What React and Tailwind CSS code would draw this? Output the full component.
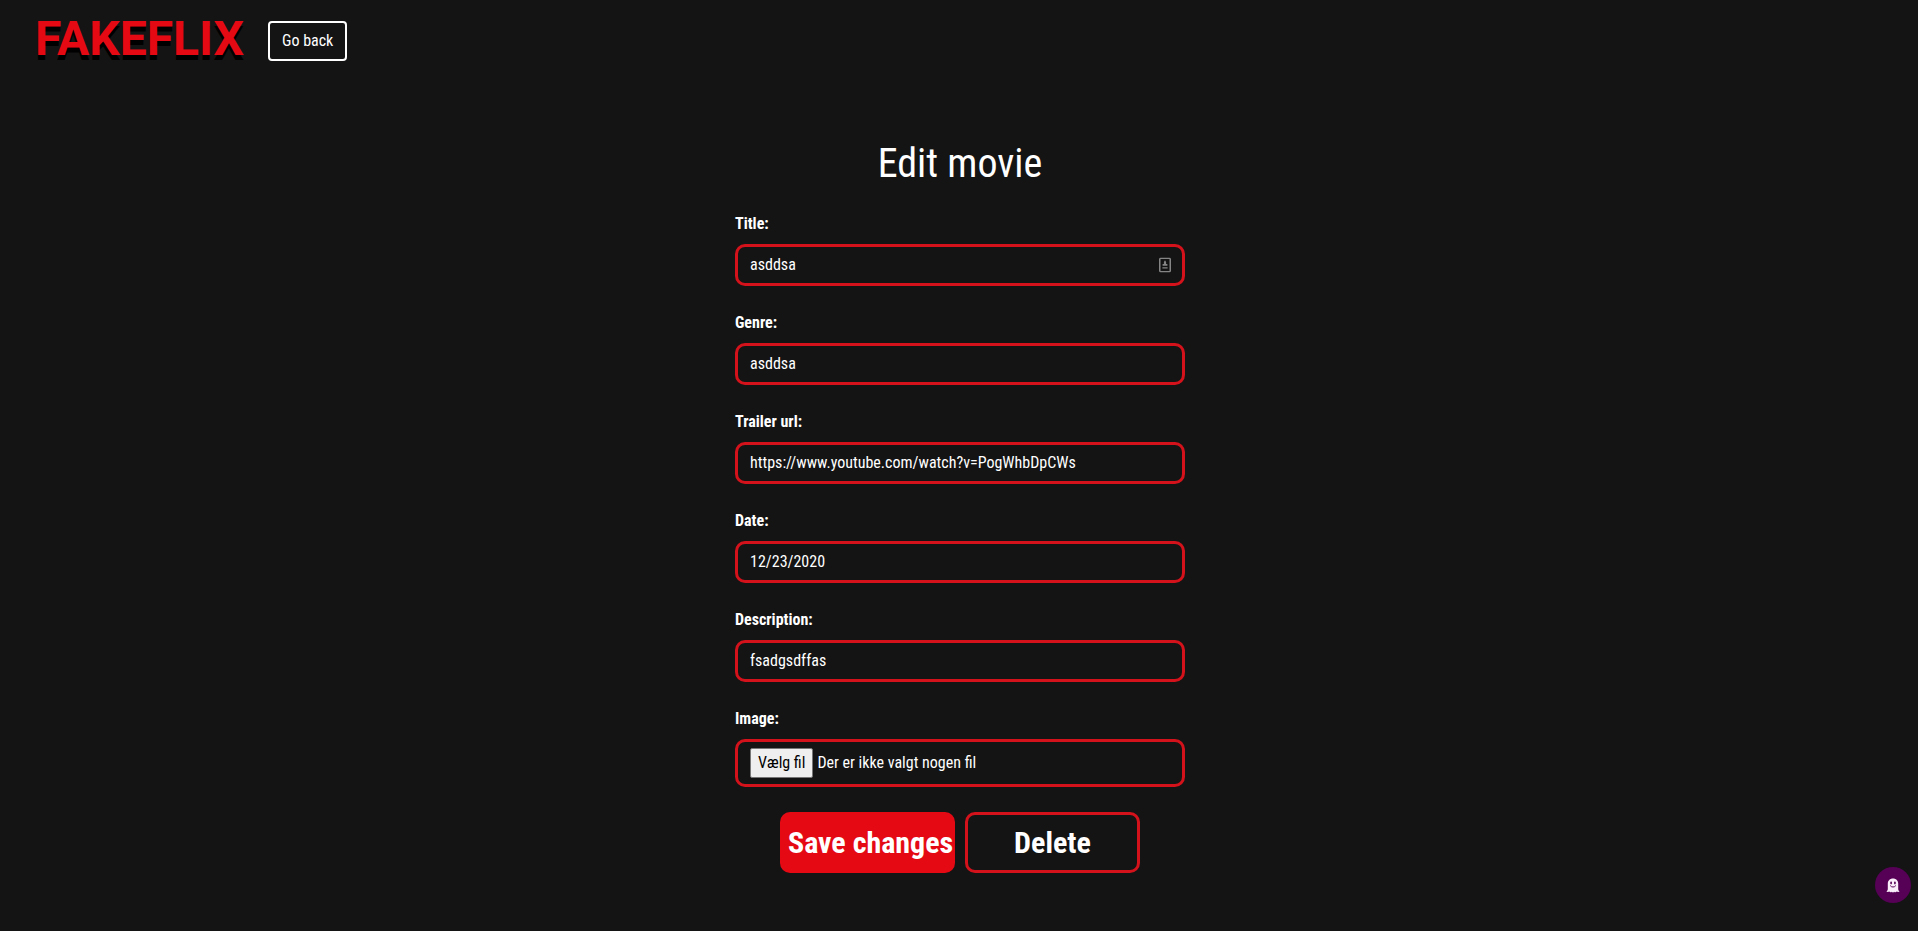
import { useRef } from "react";

const fields = [
  { id: "title", label: "Title:", value: "asddsa", badge: true },
  { id: "genre", label: "Genre:", value: "asddsa" },
  { id: "trailer", label: "Trailer url:", value: "https://www.youtube.com/watch?v=PogWhbDpCWs" },
  { id: "date", label: "Date:", value: "12/23/2020" },
  { id: "description", label: "Description:", value: "fsadgsdffas" },
];

function ContactIcon() {
  return (
    <svg viewBox="0 0 12 15" className="pointer-events-none absolute top-1/2 right-3.5 h-[15px] w-3 -translate-y-1/2" aria-hidden="true">
      <rect x="0.75" y="0.75" width="10.5" height="13.5" rx="1" fill="none" stroke="#858585" strokeWidth="1.5" />
      <path d="M6 2.8 L7.1 4.6 V6.6 H8.4 V8.2 H3.6 V6.6 H4.9 V4.6 Z" fill="#858585" />
      <path d="M3.4 10.4 H8.6" stroke="#858585" strokeWidth="1.4" />
    </svg>
  );
}

function GhostIcon() {
  return (
    <svg viewBox="0 0 14 15" className="h-[15px] w-3.5" aria-hidden="true">
      <path d="M7 0.4 C3.9 0.4 1.8 2.6 1.8 5.6 V11 C1.8 12.2 1.2 13 0.4 13.6 C1.3 14.1 2.5 14 3.3 13.5 C3.9 14.5 5.1 14.6 5.8 13.8 C6.4 14.7 7.6 14.7 8.2 13.8 C8.9 14.6 10.1 14.5 10.7 13.5 C11.5 14 12.7 14.1 13.6 13.6 C12.8 13 12.2 12.2 12.2 11 V5.6 C12.2 2.6 10.1 0.4 7 0.4 Z" fill="#fbeefb" />
      <ellipse cx="5.1" cy="5" rx="0.9" ry="1.4" fill="#560056" />
      <ellipse cx="8.9" cy="5" rx="0.9" ry="1.4" fill="#560056" />
      <path d="M4.4 7.9 C5.4 9.5 8.6 9.5 9.6 7.9" fill="none" stroke="#560056" strokeWidth="1" strokeLinecap="round" />
    </svg>
  );
}

export default function App() {
  const fileInput = useRef(null);

  return (
    <div className="min-h-screen bg-[#141414] font-['Roboto_Condensed',Roboto,sans-serif] text-base text-white">
      <header className="flex items-center gap-6 px-[35px] pt-[11px]">
        <a href="#home" className="pb-1 font-[Roboto,sans-serif] text-5xl leading-[56px] font-bold text-[#e50914] [text-shadow:0_5px_0_#000]">
          FAKEFLIX
        </a>
        <button type="button" className="h-10 rounded border-2 border-white px-3">Go back</button>
      </header>

      <main className="flex flex-col items-center pt-[63px] pb-14 pl-0.5">
        <h1 className="text-center text-[40px] leading-[60px]">Edit movie</h1>
        <form className="mt-[17px] w-full max-w-[450px]" onSubmit={(e) => e.preventDefault()}>
          <div className="flex flex-col gap-6">
            {fields.map((f) => (
              <div key={f.id} className="flex flex-col gap-2">
                <label htmlFor={f.id} className="h-[25px] leading-[26px] font-bold">{f.label}</label>
                <div className="relative">
                  <input
                    id={f.id}
                    type="text"
                    defaultValue={f.value}
                    className="block h-[42px] w-full rounded-[10px] border-3 border-[#d3121b] bg-transparent px-3 pb-0.5 text-white"
                  />
                  {f.badge && <ContactIcon />}
                </div>
              </div>
            ))}
            <div className="flex flex-col gap-2">
              <label htmlFor="image" className="h-[25px] leading-[26px] font-bold">Image:</label>
              <div className="relative flex h-12 items-center gap-1 rounded-[10px] border-3 border-[#d3121b] px-3">
                <input ref={fileInput} id="image" type="file" className="sr-only" />
                <button
                  type="button"
                  onClick={() => fileInput.current.click()}
                  className="h-[30px] rounded-xs border border-[#767676] bg-[#efefef] px-[7px] text-black"
                >
                  Vælg fil
                </button>
                <span>Der er ikke valgt nogen fil</span>
              </div>
            </div>
          </div>
          <div className="mt-[25px] flex justify-center gap-2.5 text-3xl font-bold">
            <button type="submit" className="h-[61px] w-[175px] rounded-[10px] bg-[#e50914] pl-2 text-left whitespace-nowrap">
              Save changes
            </button>
            <button type="button" className="h-[61px] w-[175px] rounded-[10px] border-3 border-[#d3121b]">
              Delete
            </button>
          </div>
        </form>
      </main>

      <button
        type="button"
        aria-label="Open extension"
        className="fixed right-[7px] bottom-7 flex size-9 items-center justify-center rounded-full bg-[#560056]"
      >
        <GhostIcon />
      </button>
    </div>
  );
}
